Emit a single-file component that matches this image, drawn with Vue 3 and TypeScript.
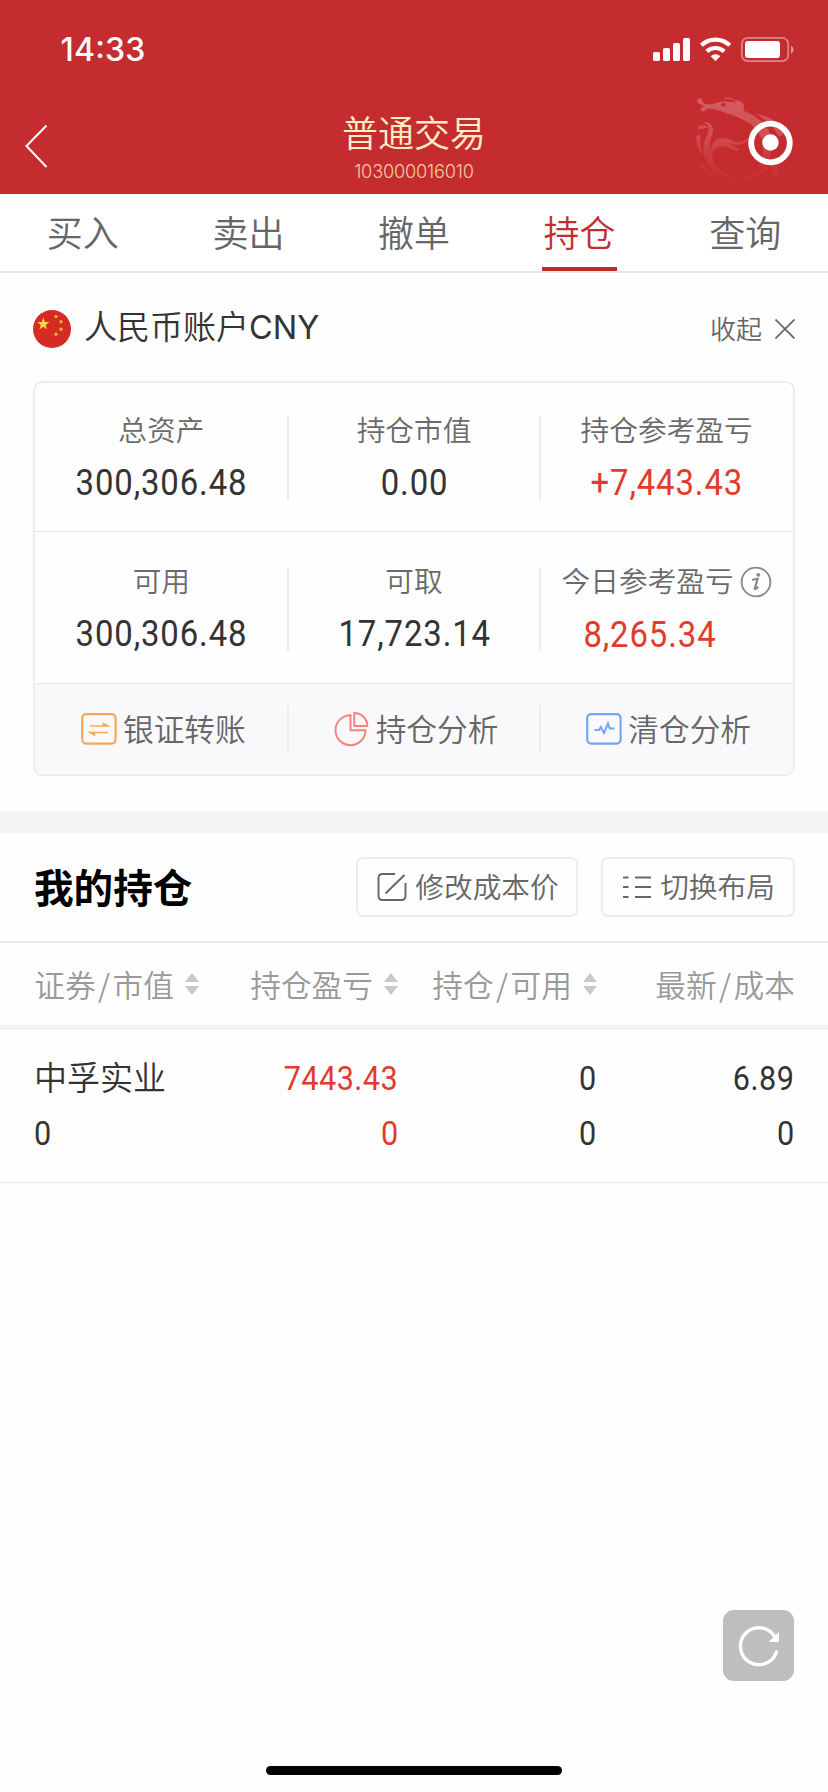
<script setup lang="ts">
interface Cell {
  label: string
  value: string
  tone?: 'up'
  info?: boolean
}

const tabs: string[] = ['买入', '卖出', '撤单', '持仓', '查询']
const activeTab = '持仓'

const summary: Cell[][] = [
  [
    { label: '总资产', value: '300,306.48' },
    { label: '持仓市值', value: '0.00' },
    { label: '持仓参考盈亏', value: '+7,443.43', tone: 'up' },
  ],
  [
    { label: '可用', value: '300,306.48' },
    { label: '可取', value: '17,723.14' },
    { label: '今日参考盈亏', value: '8,265.34', tone: 'up', info: true },
  ],
]

const columns: { parts: string[]; sortable: boolean }[] = [
  { parts: ['证券', '市值'], sortable: true },
  { parts: ['持仓盈亏'], sortable: true },
  { parts: ['持仓', '可用'], sortable: true },
  { parts: ['最新', '成本'], sortable: false },
]
</script>

<template>
  <div class="page">
    <header class="top">
      <div class="status">
        <span class="time">14:33</span>
        <svg class="status-icons" width="142" height="28" viewBox="0 0 142 28">
          <g fill="#fff">
            <rect x="0" y="16" width="7" height="9" rx="1.6" />
            <rect x="10" y="12" width="7" height="13" rx="1.6" />
            <rect x="20" y="7" width="7" height="18" rx="1.6" />
            <rect x="30" y="2" width="7" height="23" rx="1.6" />
            <path d="M62.500 25 L57.700 20.200 A7 7 0 0 1 67.300 20.200 Z" />
            <rect x="92" y="5" width="35" height="17" rx="3" />
            <path d="M138 9.500 a4.800 4.800 0 0 1 0 8.500z" opacity=".5" />
          </g>
          <g fill="none" stroke="#fff" stroke-width="4.200">
            <path d="M48.300 9.300 A20.500 20.500 0 0 1 76.700 9.300" />
            <path d="M53.800 15.400 A12.800 12.800 0 0 1 71.200 15.400" />
          </g>
          <rect x="88.800" y="1.800" width="46.400" height="23.400" rx="6" fill="none" stroke="#fff" stroke-width="1.800" opacity=".42" />
        </svg>
      </div>
      <div class="nav">
        <svg class="back" width="28" height="46" viewBox="0 0 28 46">
          <path d="M23.500 2.500 L3.500 23 L23.500 44" fill="none" stroke="#fff" stroke-width="2" />
        </svg>
        <div class="heading">
          <div class="title">普通交易</div>
          <div class="acct">103000016010</div>
        </div>
        <svg class="dragon" width="160" height="110" viewBox="0 0 480 330">
          <defs>
            <linearGradient id="fade" gradientUnits="userSpaceOnUse" x1="0" y1="50" x2="0" y2="310">
              <stop offset="0" stop-color="#e8909c" stop-opacity=".48" />
              <stop offset=".45" stop-color="#e88a8e" stop-opacity=".36" />
              <stop offset="1" stop-color="#e03a28" stop-opacity=".12" />
            </linearGradient>
          </defs>
          <g fill="url(#fade)">
            <path fill-rule="evenodd" d="M111 62 C112 53 125 52 127 61 C128 69 134 73 146 73 C163 74 168 66 184 65 C202 63 214 68 228 67 C220 57 207 56 192 56 C192 49 214 52 226 62 C238 60 251 67 252 80 L251 92 C282 104 312 125 326 151 C342 183 336 220 320 258 L294 262 C310 235 314 196 300 166 C282 131 246 116 211 103 C178 91 158 85 143 86 C135 90 134 95 124 94 C117 87 125 81 134 79 C128 73 112 74 111 62 Z M190 68 a7 6 0 1 0 .1 0Z" />
            <path d="M288 101 C325 110 364 128 369 151 C373 164 364 171 355 169 C345 145 320 120 288 101Z" />
            <path d="M132 126 C151 124 165 143 158 160 C145 191 145 230 166 254 C184 275 209 285 235 290 C190 292 155 276 140 247 C123 214 130 185 143 162 C150 144 145 132 132 130Z" />
            <path d="M114 143 C120 134 139 133 145 145 C136 142 128 148 121 146 C117 148 113 147 114 143Z" />
            <path d="M109 178 C105 166 116 160 120 168 C124 178 117 188 124 206 L130 223 C113 212 111 196 109 178Z" />
            <path d="M157 254 C146 222 149 190 173 178 C192 170 210 177 224 185 C242 190 255 181 268 174 C258 188 246 196 230 194 L212 193 L235 207 C237 213 229 215 222 211 C197 198 178 193 165 207 C155 218 156 237 157 254Z" />
            <path d="M118 253 C120 244 130 247 132 256 C145 281 180 286 203 291 C165 293 136 283 125 266 C120 262 116 259 118 253Z" />
            <path d="M203 285 C252 299 292 285 313 260 L326 260 C305 292 263 310 203 285Z" />
            <path d="M339 245 C357 254 357 267 350 276 C356 282 352 291 342 290 C331 291 330 283 338 276 C329 268 333 255 339 245Z" />
            <path d="M193 302 C217 295 240 300 267 299 C246 311 218 302 199 309Z" />
          </g>
        </svg>
        <svg class="target" width="46" height="46" viewBox="0 0 46 46">
          <circle cx="23.500" cy="23" r="19.300" fill="none" stroke="#fff" stroke-width="5.800" />
          <circle cx="23.500" cy="22.500" r="8.200" fill="#fff" />
        </svg>
      </div>
    </header>

    <nav class="tabs">
      <div v-for="t in tabs" :key="t" class="tab" :class="{ active: t === activeTab }"><span>{{ t }}</span></div>
    </nav>

    <section class="account">
      <svg class="flag" width="38" height="38" viewBox="0 0 38 38">
        <circle cx="19" cy="19" r="19" fill="#d52b24" />
        <path d="M10.300 7.500 L11.800 12 H16.300 L12.700 14.900 L14 19.500 L10.300 16.800 L6.400 19.500 L7.800 14.900 L4.200 12 H8.700Z" fill="#fbd745" />
        <g fill="#f3b93c">
          <circle cx="23" cy="6.500" r="1.600" /><circle cx="28" cy="11.700" r="1.600" />
          <circle cx="28" cy="19.200" r="1.600" /><circle cx="23" cy="24.200" r="1.600" />
        </g>
      </svg>
      <span class="account-name">人民币账户<span class="latin">CNY</span></span>
      <span class="collapse">收起</span>
      <svg class="close" width="20" height="20" viewBox="0 0 20 20">
        <path d="M.5 .5 L19.500 19.500 M19.500 .5 L.5 19.500" stroke="#666" stroke-width="1.700" />
      </svg>
    </section>

    <section class="card">
      <div v-for="(row, r) in summary" :key="r" class="row">
        <div v-for="cell in row" :key="cell.label" class="cell">
          <div class="label">
            {{ cell.label }}
            <svg v-if="cell.info" class="info" width="32" height="32" viewBox="0 0 32 32">
              <circle cx="16" cy="16" r="14.400" fill="none" stroke="#8c8c8c" stroke-width="1.900" />
              <circle cx="18.200" cy="8.800" r="1.900" fill="#888" />
              <path d="M12.200 14.200 C14.500 13 16 12.600 17.600 12.800 L14.800 22.500 C14.800 23.700 16.200 22.900 18.200 20.800" fill="none" stroke="#888" stroke-width="2.200" />
            </svg>
          </div>
          <div class="value" :class="[cell.tone, { shifted: cell.info }]"><span class="num">{{ cell.value }}</span></div>
        </div>
      </div>
      <div class="actions">
        <div class="action">
          <svg width="36" height="36" viewBox="0 0 36 36">
            <rect x="1.200" y="3.200" width="33.400" height="29.400" rx="4" fill="none" stroke="#f6a85a" stroke-width="2.200" />
            <path d="M9 15 H27 L22.500 12.500 V15 M27 21.500 H9 L13.500 24 V21.500" fill="#f6a85a" stroke="#f6a85a" stroke-width="1.600" />
          </svg>
          <span>银证转账</span>
        </div>
        <div class="action">
          <svg width="36" height="36" viewBox="0 0 36 36">
            <g fill="none" stroke="#f4837d" stroke-width="2">
              <path d="M16.500 4.200 A15 15 0 1 0 31.500 19.200 H16.500Z" />
              <path d="M20.300 2 A13 13 0 0 1 33.300 15 H20.300Z" />
            </g>
          </svg>
          <span>持仓分析</span>
        </div>
        <div class="action">
          <svg width="36" height="36" viewBox="0 0 36 36">
            <rect x="1.200" y="3.200" width="33.400" height="29.400" rx="4" fill="none" stroke="#74a5f8" stroke-width="2.200" />
            <path d="M8.500 19 H13 L14.800 16 L18 22 L22 12.500 L23.800 17.500 H28.500" fill="none" stroke="#74a5f8" stroke-width="2" />
          </svg>
          <span>清仓分析</span>
        </div>
      </div>
    </section>

    <div class="band" />

    <section class="holdings-head">
      <h2>我的持仓</h2>
      <button class="btn edit">
        <svg width="30" height="30" viewBox="0 0 30 30">
          <path d="M18 2 H5.500 Q1.500 2 1.500 6 V24 Q1.500 28 5.500 28 H24.500 Q28.500 28 28.500 24 V11 M27.500 3 L8.500 21.500" fill="none" stroke="#666" stroke-width="1.900" />
        </svg>
        <span>修改成本价</span>
      </button>
      <button class="btn layout">
        <svg width="28" height="24" viewBox="0 0 28 24">
          <path d="M0 2.500 H5.500 M12 2.500 H28 M0 12 H5.500 M12 12 H28 M0 22 H5.500 M12 22 H28" stroke="#666" stroke-width="2" />
        </svg>
        <span>切换布局</span>
      </button>
    </section>

    <section class="thead">
      <div v-for="(c, i) in columns" :key="i" class="th">
        <template v-for="(p, k) in c.parts" :key="p"><span v-if="k" class="slash">/</span><span>{{ p }}</span></template>
        <svg v-if="c.sortable" class="sort" width="14" height="22" viewBox="0 0 14 22">
          <path d="M0 9 L7 0 L14 9Z M0 13 L7 22 L14 13Z" fill="#c9c9c9" />
        </svg>
      </div>
    </section>

    <section class="stock">
      <span class="name">中孚实业</span>
      <span class="up"><span class="num">7443.43</span></span>
      <span><span class="num">0</span></span>
      <span><span class="num">6.89</span></span>
      <span class="first"><span class="num">0</span></span>
      <span class="up"><span class="num">0</span></span>
      <span><span class="num">0</span></span>
      <span><span class="num">0</span></span>
    </section>

    <button class="refresh" aria-label="刷新">
      <svg width="71" height="71" viewBox="0 0 71 71">
        <path d="M53.500 42 A18.500 18.500 0 1 1 51 25.500" fill="none" stroke="#fff" stroke-width="3.400" stroke-linecap="round" />
        <path d="M56 22 V32 H45.500Z" fill="#fff" />
      </svg>
    </button>
    <div class="home" />
  </div>
</template>

<style>
body {
  background: #fefefe;
}
</style>

<style scoped>
.page {
  position: relative;
  width: 828px;
  height: 1792px;
  overflow: hidden;
  background: #fefefe;
  color: #333;
  font-family: 'Noto Sans CJK SC', sans-serif;
  font-weight: 350;
  box-sizing: border-box;
}
.page * {
  box-sizing: border-box;
}
svg {
  display: block;
  flex: none;
}
.top {
  height: 194px;
  background: #c52c2f;
}
.status {
  height: 98px;
  padding: 36px 33px 0 60.500px;
  display: flex;
  justify-content: space-between;
}
.time {
  color: #fff;
  font: 550 32px/28px Inter, sans-serif;
  font-feature-settings: 'case';
  letter-spacing: 0.200px;
}
.nav {
  position: relative;
  height: 96px;
}
.back {
  position: absolute;
  left: 23px;
  top: 25px;
}
.heading {
  text-align: center;
}
.title {
  padding-top: 6px;
  font-size: 36px;
  line-height: 54px;
  color: #fdeec3;
}
.acct {
  font: 350 18.200px/22px Inter, sans-serif;
  margin-top: 2px;
  letter-spacing: -0.200px;
  color: #f3c9a3;
}
.dragon {
  position: absolute;
  left: 660px;
  top: -18px;
}
.target {
  position: absolute;
  left: 747px;
  top: 22px;
}
.tabs {
  height: 79px;
  display: flex;
  background: #fff;
  border-bottom: 2px solid #e5e5e5;
}
.tab {
  flex: 1;
  display: flex;
  justify-content: center;
  font-size: 36px;
  line-height: 74px;
  color: #666;
}
.tab.active {
  color: #c52c2f;
}
.tab.active span {
  width: 75px;
  height: 77px;
  text-align: center;
  border-bottom: 4px solid #c52c2f;
}
.account {
  height: 108px;
  padding: 3px 33px 0;
  display: flex;
  align-items: center;
}
.account-name {
  margin-left: 13px;
  padding-bottom: 5px;
  font-size: 33px;
  line-height: 48px;
}
.latin {
  font-family: Inter, sans-serif;
  font-size: 32.500px;
  font-weight: 400;
}
.collapse {
  margin-left: auto;
  padding-bottom: 2px;
  font-size: 26px;
  color: #666;
}
.close {
  margin-left: 13px;
}
.card {
  margin: 0 33px;
  height: 395px;
  border: 2px solid #ededed;
  border-radius: 9px;
  overflow: hidden;
}
.row {
  height: 149px;
  display: flex;
  border-bottom: 1px solid #e8e8e8;
}
.row + .row {
  height: 152px;
}
.cell {
  position: relative;
  flex: 1;
  padding-top: 25px;
  text-align: center;
}
.row + .row .cell {
  padding-top: 27px;
}
.cell + .cell::before,
.action + .action::before {
  content: '';
  position: absolute;
  left: -1px;
  top: 33px;
  width: 2px;
  height: 84px;
  background: #ececec;
}
.row + .row .cell::before {
  top: 35px;
}
.label {
  display: flex;
  justify-content: center;
  align-items: center;
  height: 40px;
  font-size: 28.700px;
  color: #6a6a6a;
}
.info {
  margin: 5px 0 0 6px;
}
.value {
  height: 60px;
  line-height: 60px;
  margin-top: 2px;
  font-size: 36.500px;
}
.value.shifted {
  padding: 1px 35px 0 0;
}
.num {
  display: inline-block;
  font-family: Roboto, sans-serif;
  font-weight: 450;
  letter-spacing: 1px;
  margin-right: -1px;
  transform: scaleX(0.9);
}
.up {
  color: #e23a2b;
}
.actions {
  height: 90px;
  display: flex;
  background: #f9f9fb;
}
.action {
  position: relative;
  flex: 1;
  display: flex;
  align-items: center;
  justify-content: center;
  gap: 6px;
  padding: 0 0 1px 4px;
  font-size: 30.700px;
  color: #666;
}
.action span {
  padding-bottom: 3px;
}
.action + .action::before {
  top: 21px;
  height: 48px;
}
.band {
  height: 22px;
  margin-top: 35px;
  background: #f4f4f4;
}
.holdings-head {
  height: 110px;
  padding: 0 33px 0 34px;
  display: flex;
  align-items: center;
  border-bottom: 2px solid #e9e9e9;
}
h2 {
  margin: 0 auto 0 0;
  padding-bottom: 4px;
  font-size: 39.600px;
  font-weight: 600;
  color: #000;
}
.btn {
  height: 60px;
  padding: 0;
  display: flex;
  align-items: center;
  justify-content: center;
  border: 2px solid #ececec;
  border-radius: 7px;
  background: transparent;
  font: inherit;
  font-size: 28.700px;
  color: #666;
}
.btn span {
  padding-bottom: 3px;
}
.edit {
  width: 222px;
  gap: 8px;
  padding-left: 2px;
}
.layout {
  width: 194px;
  margin-left: 23px;
  gap: 9px;
  padding-left: 2px;
}
.thead {
  height: 87px;
  padding: 0 0 1px 34px;
  display: grid;
  grid-template-columns: 165px 199px 199px 1fr;
  align-items: center;
  font-size: 30.700px;
  color: #999;
  border-bottom: 5px solid #f3f3f3;
}
.th {
  display: flex;
  align-items: center;
  justify-content: flex-end;
}
.th:last-child {
  padding-right: 33px;
}
.slash {
  margin: 0 2.500px;
}
.sort {
  margin-left: 11px;
}
.stock {
  height: 153px;
  padding: 18px 34px 0 34px;
  display: grid;
  grid-template-columns: 165px 199px 198px 1fr;
  grid-template-rows: 55px 55px;
  align-items: center;
  text-align: right;
  font-size: 34px;
  border-bottom: 1px solid #e6e6e6;
}
.stock .num {
  letter-spacing: 0.500px;
  margin-right: -0.500px;
  transform-origin: right;
}
.stock .first .num {
  transform-origin: left;
}
.stock > .name,
.stock > .first {
  text-align: left;
  white-space: nowrap;
}
.stock > .name {
  font-size: 33px;
}
.refresh {
  position: absolute;
  left: 723px;
  top: 1610px;
  width: 71px;
  height: 71px;
  padding: 0;
  border: 0;
  border-radius: 11px;
  background: #bebebe;
}
.home {
  position: absolute;
  left: 266px;
  top: 1766px;
  width: 296px;
  height: 9px;
  border-radius: 5px;
  background: #000;
}
</style>
